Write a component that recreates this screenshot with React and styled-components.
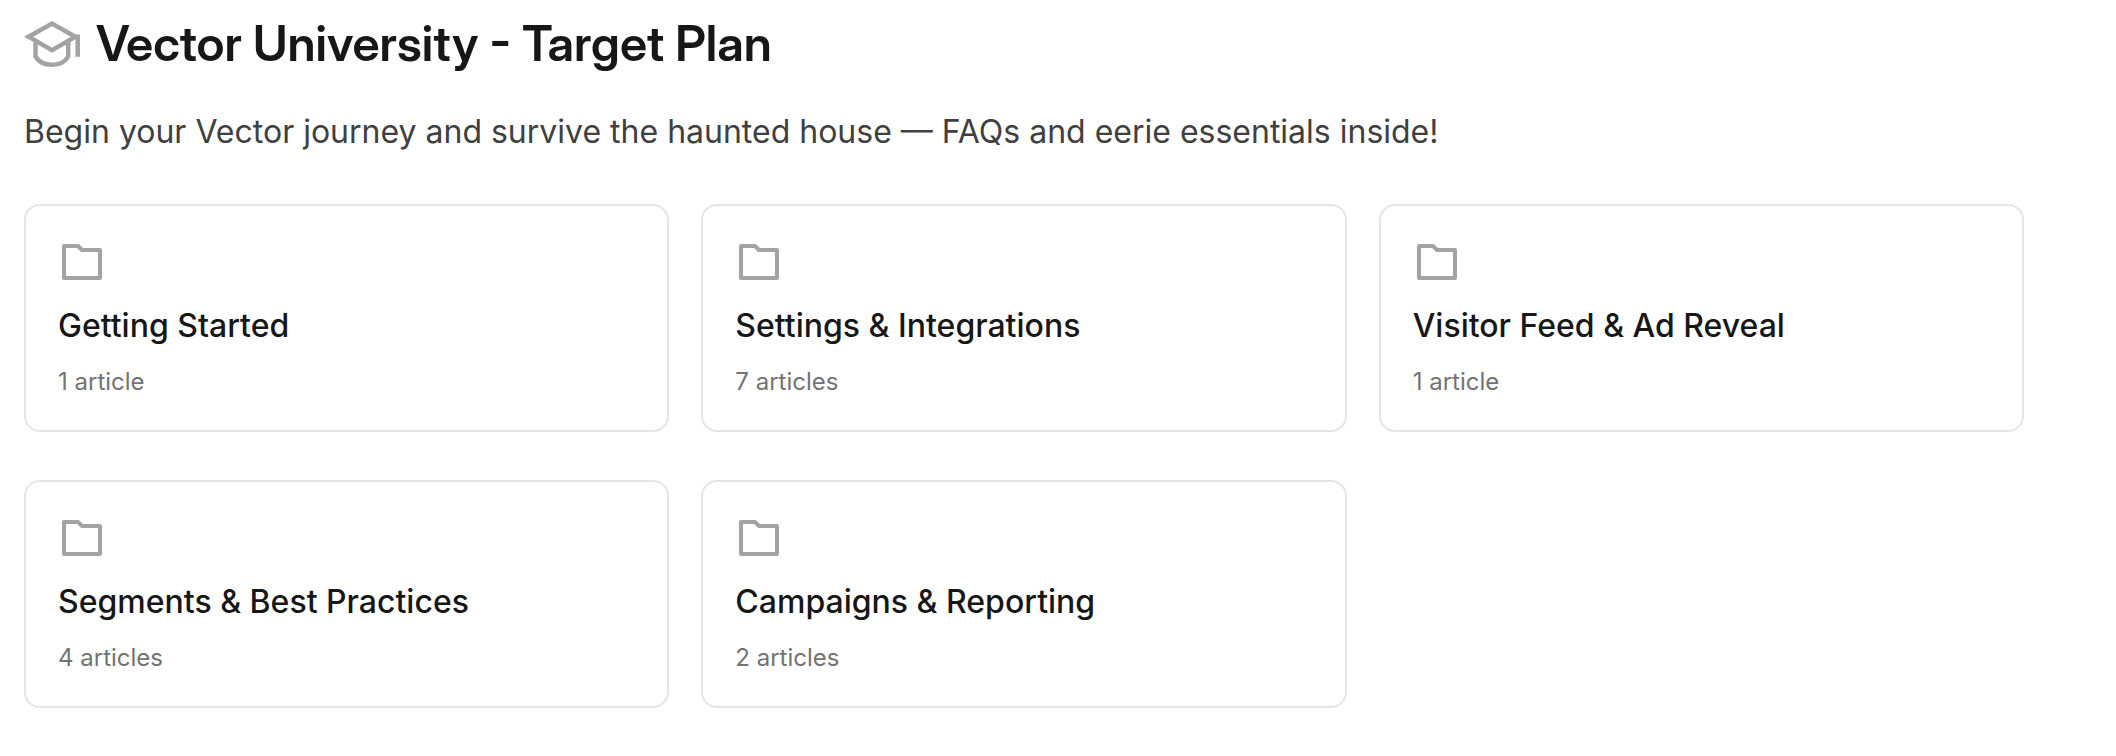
import styled, { createGlobalStyle } from "styled-components";

const collections = [
  { id: 1, title: "Getting Started", count: "1 article" },
  { id: 2, title: "Settings & Integrations", count: "7 articles" },
  { id: 3, title: "Visitor Feed & Ad Reveal", count: "1 article" },
  { id: 4, title: "Segments & Best Practices", count: "4 articles" },
  { id: 5, title: "Campaigns & Reporting", count: "2 articles" },
];

const App = () => {
  return (
    <>
      <GlobalStyle />
      <Page>
        <Heading>
          <CapIcon viewBox="0 0 56 56" aria-hidden="true">
            <path d="M4.6 20.8 28 7.5 51.4 20.8 28 34.2z" />
            <path d="M11.5 24V40.5C14.5 45.6 20.6 48.8 28 48.8s13.3-3.2 16.2-8.3V24" />
            <path d="M51 20.8h2.7V40.8" />
          </CapIcon>
          <Title>Vector University - Target Plan</Title>
        </Heading>
        <Description>
          Begin your Vector journey and survive the haunted house — FAQs and
          eerie essentials inside!
        </Description>
        <Grid>
          {collections.map(({ id, title, count }) => (
            <Card key={id} href="#">
              <FolderIcon viewBox="0 0 48 48" aria-hidden="true">
                <path d="M6 8h14l4 4h18v28H6z" />
              </FolderIcon>
              <CardTitle>{title}</CardTitle>
              <Count>{count}</Count>
            </Card>
          ))}
        </Grid>
      </Page>
    </>
  );
};

export default App;

const GlobalStyle = createGlobalStyle`
  * {
    box-sizing: border-box;
  }

  body {
    margin: 0;
    background-color: #ffffff;
    font-family: Inter, "Liberation Sans", sans-serif;
  }
`;

const Page = styled.main`
  padding: 12px 92px 48px 24px;
`;

const Heading = styled.header`
  display: flex;
  align-items: center;
  gap: 16px;
`;

const CapIcon = styled.svg`
  flex-shrink: 0;
  width: 56px;
  height: 56px;
  fill: none;
  stroke: #a3a3a3;
  stroke-width: 4.5;
`;

const Title = styled.h1`
  margin: 0;
  font-family: "Inter Display", Inter, "Liberation Sans", sans-serif;
  font-size: 49px;
  line-height: 64px;
  font-weight: 600;
  color: #171717;
`;

const Description = styled.p`
  margin: 32px 0 48px;
  font-size: 32px;
  line-height: 48px;
  color: #404040;
`;

const Grid = styled.div`
  display: grid;
  grid-template-columns: repeat(3, 1fr);
  gap: 48px 32px;
`;

const Card = styled.a`
  display: flex;
  flex-direction: column;
  padding: 32px;
  border: 2px solid #e5e5e5;
  border-radius: 16px;
  text-decoration: none;
`;

const FolderIcon = styled.svg`
  width: 48px;
  height: 48px;
  fill: none;
  stroke: #a3a3a3;
  stroke-width: 4;
  stroke-linejoin: round;
`;

const CardTitle = styled.h2`
  margin: 16px 0;
  font-size: 32px;
  line-height: 48px;
  font-weight: 500;
  color: #171717;
`;

const Count = styled.p`
  margin: 0;
  font-size: 24px;
  line-height: 32px;
  color: #737373;
`;
